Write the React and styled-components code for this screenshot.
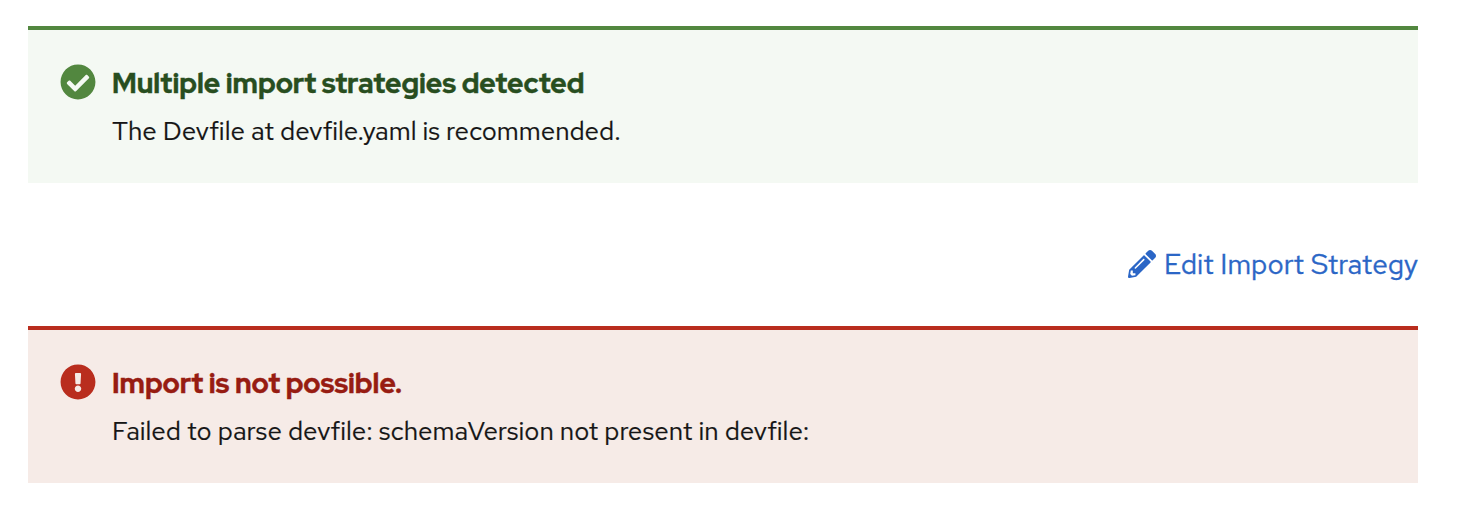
import React from 'react';
import styled, { createGlobalStyle } from 'styled-components';
import { FaCheckCircle, FaExclamationCircle, FaPencilAlt } from 'react-icons/fa';

const GlobalStyle = createGlobalStyle`
  * { box-sizing: border-box; }
  body {
    margin: 0;
    background: #ffffff;
    color: #151515;
    font-family: 'Red Hat Text', Lato, sans-serif;
  }
`;

const variants = {
  success: { accent: '#52873f', title: '#284e1f', background: '#f4f9f3', icon: FaCheckCircle },
  danger: { accent: '#b92d1e', title: '#971c12', background: '#f6ebe7', icon: FaExclamationCircle },
};

const Page = styled.main`
  display: flex;
  flex-direction: column;
  padding: 26px 46px 0 28px;
`;

const AlertBox = styled.section`
  display: flex;
  gap: 16px;
  height: 157px;
  padding: 32px 32px 0;
  border-top: 4px solid ${({ $variant }) => variants[$variant].accent};
  background: ${({ $variant }) => variants[$variant].background};
`;

const AlertIcon = styled.div`
  flex: none;
  width: 36px;
  height: 36px;
  margin-top: 2px;
  color: ${({ $variant }) => variants[$variant].accent};
  svg { display: block; }
`;

const AlertText = styled.div`
  white-space: nowrap;
`;

const AlertTitle = styled.h4`
  margin: 0;
  font-family: 'Red Hat Display', 'Red Hat Text', Lato, sans-serif;
  font-size: 28px;
  font-weight: 800;
  line-height: 42px;
  letter-spacing: -0.02px;
  -webkit-text-stroke: 0.35px currentColor;
  color: ${({ $variant }) => variants[$variant].title};
`;

const AlertDescription = styled.p`
  margin: 8px 0 0;
  font-size: 26px;
  line-height: 39px;
  letter-spacing: -0.015px;
  -webkit-text-stroke: 0.2px currentColor;
`;

const Actions = styled.div`
  display: flex;
  justify-content: flex-end;
  height: 143px;
  padding-top: 60px;
`;

const LinkButton = styled.button`
  display: flex;
  align-items: center;
  gap: 8px;
  height: 42px;
  padding: 0;
  border: 0;
  background: none;
  color: #2b66c6;
  font-family: inherit;
  font-size: 28px;
  line-height: 42px;
  white-space: nowrap;
`;

const LinkLabel = styled.span`
  -webkit-text-stroke: 0.35px currentColor;
`;

function Alert({ variant, title, children }) {
  const Icon = variants[variant].icon;
  return (
    <AlertBox $variant={variant}>
      <AlertIcon $variant={variant}><Icon size={36} /></AlertIcon>
      <AlertText>
        <AlertTitle $variant={variant}>{title}</AlertTitle>
        <AlertDescription>{children}</AlertDescription>
      </AlertText>
    </AlertBox>
  );
}

export default function App() {
  return (
    <>
      <GlobalStyle />
      <Page>
        <Alert variant="success" title="Multiple import strategies detected">
          The Devfile at devfile.yaml is recommended.
        </Alert>
        <Actions>
          <LinkButton type="button">
            <FaPencilAlt size={28} />
            <LinkLabel>Edit Import Strategy</LinkLabel>
          </LinkButton>
        </Actions>
        <Alert variant="danger" title="Import is not possible.">
          Failed to parse devfile: schemaVersion not present in devfile:
        </Alert>
      </Page>
    </>
  );
}
